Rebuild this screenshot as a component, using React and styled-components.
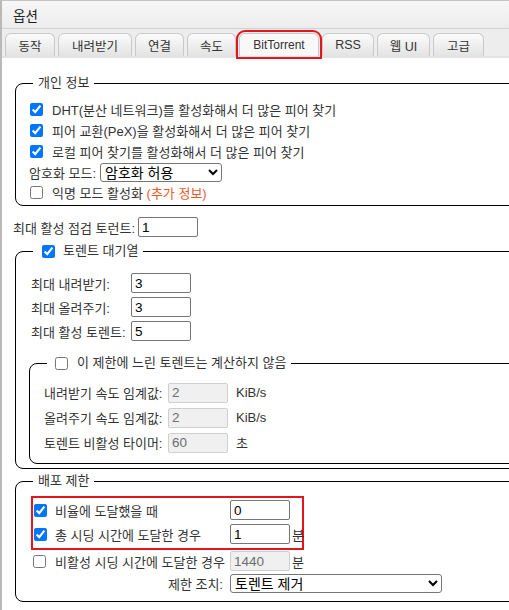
import React from 'react';
import styled, { createGlobalStyle } from 'styled-components';

const Global = createGlobalStyle`
  html, body { margin: 0; padding: 0; overflow: hidden; background: #fff; }
  body {
    font-family: "Liberation Sans", "Noto Sans CJK KR", sans-serif;
    font-size: 13px;
    color: #333;
  }
`;

const Window = styled.div`
  width: 660px;
  min-height: 640px;
  border-left: 2px solid #b9b9b9;
  border-top: 1px solid #c4c4c4;
  background: #fff;
`;

const TitleBar = styled.div`
  height: 27px;
  display: flex;
  align-items: center;
  padding-left: 11px;
  font-size: 13.5px;
  color: #222;
  background: linear-gradient(#f7f7f7, #ececec);
  border-bottom: 1px solid #d2d2d2;
`;

const TabStrip = styled.div`
  height: 25px;
  padding-top: 2px;
  display: flex;
  align-items: flex-end;
  gap: 3px;
  padding-left: 3px;
  background: #ededed;
  border-bottom: 2px solid #e2e2e2;
`;

const Tab = styled.div`
  box-sizing: border-box;
  width: ${(p) => p.$w}px;
  height: 23px;
  display: flex;
  align-items: center;
  justify-content: center;
  border: 1px solid #c9c9c9;
  border-bottom: none;
  border-radius: 6px 6px 0 0;
  background: ${(p) => (p.$active ? '#f8f8f8' : 'linear-gradient(#fbfbfb, #e3e3e3)')};
  font-size: ${(p) => (p.$active ? 12 : 12.5)}px;
  color: #333;
  ${(p) => p.$active && 'outline: 2px solid #e3151d; outline-offset: 1px;'}
`;

const Content = styled.div`
  padding: 17px 0 20px 11px;
`;

const Fieldset = styled.fieldset`
  margin: ${(p) => p.$mt || 0}px 2px 0 2px;
  border: 1px solid #000;
  border-radius: 8px;
  padding: ${(p) => p.$pt ?? 8}px 11px ${(p) => p.$pb ?? 3}px 11px;
  min-width: 0;
`;

const Legend = styled.legend`
  margin-left: 6px;
  padding: 0 5px;
  display: flex;
  align-items: center;
  font-size: 13px;
  line-height: 16px;
  color: #333;
`;

const Check = styled.input.attrs({ type: 'checkbox' })`
  width: 13px;
  height: 13px;
  margin: 0 ${(p) => p.$gap ?? 9}px 0 ${(p) => p.$ml ?? 3}px;
  flex: none;
`;

const Row = styled.div`
  display: flex;
  align-items: center;
  height: ${(p) => (p.$h ? `${p.$h}px` : 'auto')};
  padding-left: ${(p) => p.$pl || 0}px;
`;

const Label = styled.span`
  display: inline-block;
  width: ${(p) => (p.$w ? `${p.$w}px` : 'auto')};
  flex: none;
  font-size: 13px;
  text-align: ${(p) => (p.$right ? 'right' : 'left')};
  padding-right: ${(p) => (p.$right ? 7 : 0)}px;
  box-sizing: border-box;
  color: #333;
  white-space: nowrap;
`;

const LinkText = styled.span`
  color: #ec5a28;
`;

const TextBox = styled.input.attrs({ type: 'text' })`
  box-sizing: border-box;
  width: 60px;
  height: 20px;
  margin: 0;
  padding: 0 3px;
  border: 1px solid #767676;
  border-radius: 2px;
  font-family: "Liberation Sans", "Noto Sans CJK KR", sans-serif;
  font-size: 13.5px;
  color: #000;
  &:disabled {
    background: #f0f0f0;
    border-color: #cfcfcf;
    color: #6d6d6d;
  }
`;

const Unit = styled.span`
  margin-left: ${(p) => p.$gap ?? 8}px;
  font-size: 13px;
  color: #333;
`;

const Select = styled.select`
  box-sizing: border-box;
  width: ${(p) => p.$w}px;
  height: 19px;
  margin: 0;
  font-family: "Liberation Sans", "Noto Sans CJK KR", sans-serif;
  font-size: 14px;
  color: #000;
  border: 1px solid #767676;
  border-radius: 3px;
  background: #fff;
`;

const Highlight = styled.div`
  box-sizing: border-box;
  width: 273px;
  border: 2px solid #e3151d;
  padding: 0 0 2px 0;
`;

const tabs = [
  ['동작', 50],
  ['내려받기', 74],
  ['연결', 49],
  ['속도', 49],
  ['BitTorrent', 80],
  ['RSS', 52],
  ['웹 UI', 53],
  ['고급', 51],
];

export default function App() {
  return (
    <>
      <Global />
      <Window>
        <TitleBar>옵션</TitleBar>
        <TabStrip>
          {tabs.map(([t, w]) => (
            <Tab key={t} $w={w} $active={t === 'BitTorrent'}>
              {t}
            </Tab>
          ))}
        </TabStrip>
        <Content>
          <Fieldset $pt={8} $pb={3}>
            <Legend>개인 정보</Legend>
            <Row $h={21}>
              <Check defaultChecked />
              <Label>DHT(분산 네트워크)를 활성화해서 더 많은 피어 찾기</Label>
            </Row>
            <Row $h={21}>
              <Check defaultChecked />
              <Label>피어 교환(PeX)을 활성화해서 더 많은 피어 찾기</Label>
            </Row>
            <Row $h={21}>
              <Check defaultChecked />
              <Label>로컬 피어 찾기를 활성화해서 더 많은 피어 찾기</Label>
            </Row>
            <Row $h={20} $pl={2}>
              <Label $w={71}>암호화 모드:</Label>
              <Select $w={122} defaultValue="allow">
                <option value="allow">암호화 허용</option>
                <option value="require">암호화 요구</option>
                <option value="off">암호화 끄기</option>
              </Select>
            </Row>
            <Row $h={20}>
              <Check />
              <Label>
                익명 모드 활성화 <LinkText>(추가 정보)</LinkText>
              </Label>
            </Row>
          </Fieldset>

          <Row $h={20} style={{ marginTop: 11 }}>
            <Label $w={125}>최대 활성 점검 토런트:</Label>
            <TextBox defaultValue="1" />
          </Row>

          <Fieldset $mt={6} $pt={12} $pb={4}>
            <Legend>
              <Check defaultChecked $ml={4} $gap={8} />
              토렌트 대기열
            </Legend>
            <Row $h={24} $pl={4}>
              <Label $w={100}>최대 내려받기:</Label>
              <TextBox defaultValue="3" />
            </Row>
            <Row $h={24} $pl={4}>
              <Label $w={100}>최대 올려주기:</Label>
              <TextBox defaultValue="3" />
            </Row>
            <Row $h={24} $pl={4}>
              <Label $w={100}>최대 활성 토렌트:</Label>
              <TextBox defaultValue="5" />
            </Row>

            <Fieldset $mt={12} $pt={9} $pb={8}>
              <Legend>
                <Check $ml={3} $gap={9} />
                이 제한에 느린 토렌트는 계산하지 않음
              </Legend>
              <Row $h={25} $pl={3}>
                <Label $w={124}>내려받기 속도 임계값:</Label>
                <TextBox disabled defaultValue="2" />
                <Unit>KiB/s</Unit>
              </Row>
              <Row $h={25} $pl={3}>
                <Label $w={124}>올려주기 속도 임계값:</Label>
                <TextBox disabled defaultValue="2" />
                <Unit>KiB/s</Unit>
              </Row>
              <Row $h={25} $pl={3}>
                <Label $w={124}>토렌트 비활성 타이머:</Label>
                <TextBox disabled defaultValue="60" />
                <Unit>초</Unit>
              </Row>
            </Fieldset>
          </Fieldset>

          <Fieldset $mt={4} $pt={7} $pb={6}>
            <Legend>배포 제한</Legend>
            <Row $pl={4}>
              <Highlight>
                <Row $h={24}>
                  <Check defaultChecked $ml={1} $gap={8} />
                  <Label $w={175}>비율에 도달했을 때</Label>
                  <TextBox defaultValue="0" />
                </Row>
                <Row $h={24}>
                  <Check defaultChecked $ml={1} $gap={8} />
                  <Label $w={175}>총 시딩 시간에 도달한 경우</Label>
                  <TextBox defaultValue="1" />
                  <Unit $gap={2}>분</Unit>
                </Row>
              </Highlight>
            </Row>
            <Row $h={22} $pl={6}>
              <Check $ml={0} $gap={9} />
              <Label $w={175}>비활성 시딩 시간에 도달한 경우</Label>
              <TextBox disabled defaultValue="1440" />
              <Unit $gap={2}>분</Unit>
            </Row>
            <Row $h={23} $pl={6}>
              <Label $w={197} $right>
                제한 조치:
              </Label>
              <Select $w={212} defaultValue="remove">
                <option value="pause">토렌트 일시정지</option>
                <option value="remove">토렌트 제거</option>
                <option value="removeFiles">토렌트와 파일 제거</option>
              </Select>
            </Row>
          </Fieldset>
        </Content>
      </Window>
    </>
  );
}
